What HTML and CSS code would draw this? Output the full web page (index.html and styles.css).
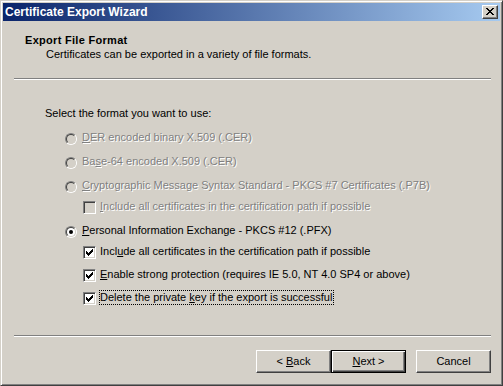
FILE: index.html
```html
<!DOCTYPE html>
<html>
<head>
<meta charset="utf-8">
<link rel="stylesheet" href="styles.css">
</head>
<body>
<div class="window">
  <div class="titlebar">
    <span class="title">Certificate Export Wizard</span>
    <span class="close-btn">
      <svg width="8" height="7" viewBox="0 0 8 7" shape-rendering="crispEdges"><path d="M0 0h2v1h-2zM6 0h2v1h-2zM1 1h2v1h-2zM5 1h2v1h-2zM2 2h4v1h-4zM3 3h2v1h-2zM2 4h4v1h-4zM1 5h2v1h-2zM5 5h2v1h-2zM0 6h2v1h-2zM6 6h2v1h-2z" fill="#000"/></svg>
    </span>
  </div>
  <div class="main">
    <div class="header">
      <div class="h-title">Export File Format</div>
      <div class="h-desc">Certificates can be exported in a variety of file formats.</div>
    </div>
    <div class="sep"></div>
    <div class="content">
      <div class="label">Select the format you want to use:</div>
      <div class="row radio-row gap11 disabled"><span class="radio"></span><span class="txt"><u>D</u>ER encoded binary X.509 (.CER)</span></div>
      <div class="row radio-row gap11 disabled"><span class="radio"></span><span class="txt">Ba<u>s</u>e-64 encoded X.509 (.CER)</span></div>
      <div class="row radio-row gap11 disabled"><span class="radio"></span><span class="txt"><u>C</u>ryptographic Message Syntax Standard - PKCS #7 Certificates (.P7B)</span></div>
      <div class="row check-row gap8 disabled"><span class="check"></span><span class="txt"><u>I</u>nclude all certificates in the certification path if possible</span></div>
      <div class="row radio-row gap11"><span class="radio checked"></span><span class="txt"><u>P</u>ersonal Information Exchange - PKCS #12 (.PFX)</span></div>
      <div class="row check-row gap8"><span class="check on"><svg width="7" height="7" viewBox="0 0 7 7" shape-rendering="crispEdges"><path d="M0 2h1v3h-1zM1 3h1v3h-1zM2 4h1v3h-1zM3 3h1v3h-1zM4 2h1v3h-1zM5 1h1v3h-1zM6 0h1v3h-1z" fill="#000"/></svg></span><span class="txt">Incl<u>u</u>de all certificates in the certification path if possible</span></div>
      <div class="row check-row gap10"><span class="check on"><svg width="7" height="7" viewBox="0 0 7 7" shape-rendering="crispEdges"><path d="M0 2h1v3h-1zM1 3h1v3h-1zM2 4h1v3h-1zM3 3h1v3h-1zM4 2h1v3h-1zM5 1h1v3h-1zM6 0h1v3h-1z" fill="#000"/></svg></span><span class="txt"><u>E</u>nable strong protection (requires IE 5.0, NT 4.0 SP4 or above)</span></div>
      <div class="row check-row gap10"><span class="check on"><svg width="7" height="7" viewBox="0 0 7 7" shape-rendering="crispEdges"><path d="M0 2h1v3h-1zM1 3h1v3h-1zM2 4h1v3h-1zM3 3h1v3h-1zM4 2h1v3h-1zM5 1h1v3h-1zM6 0h1v3h-1z" fill="#000"/></svg></span><span class="txt focus">Delete the private <u>k</u>ey if the export is successful</span></div>
    </div>
    <div class="sep"></div>
    <div class="buttons">
      <span class="btn"><span>&lt; <u>B</u>ack</span></span>
      <span class="btn default"><span><u>N</u>ext &gt;</span></span>
      <span class="btn cancel"><span>Cancel</span></span>
    </div>
  </div>
</div>
</body>
</html>
```
FILE: styles.css
```css
html, body {
  margin: 0;
  padding: 0;
  background: #d4d0c8;
}
body {
  font-family: "Liberation Sans", Arial, sans-serif;
  font-size: 11px;
  line-height: 13px;
  color: #000;
}
u {
  text-decoration: underline;
  text-underline-offset: 1px;
}
.window {
  width: 503px;
  height: 386px;
  box-sizing: border-box;
  border: 1px solid;
  border-color: #d4d0c8 #404040 #404040 #d4d0c8;
  box-shadow: inset 1px 1px 0 #fff, inset -1px -1px 0 #808080;
  padding: 2px;
  display: flex;
  flex-direction: column;
  background: #d4d0c8;
}
.titlebar {
  height: 18px;
  display: flex;
  align-items: center;
  justify-content: space-between;
  padding: 0 2px 0 2px;
  background: linear-gradient(to right, #0a246a, #a6caf0);
  flex: none;
}
.title {
  color: #fff;
  font-weight: bold;
  font-size: 12px;
  line-height: 18px;
}
.close-btn {
  width: 16px;
  height: 14px;
  box-sizing: border-box;
  background: #d4d0c8;
  border: 1px solid;
  border-color: #fff #404040 #404040 #fff;
  box-shadow: inset -1px -1px 0 #808080;
  display: flex;
  align-items: flex-start;
  justify-content: flex-start;
  padding: 2px 0 0 3px;
}
.close-btn svg { display: block; }
.main {
  flex: 1;
  display: flex;
  flex-direction: column;
}
.header {
  padding-top: 13px;
  height: 57px;
  box-sizing: border-box;
}
.h-title {
  font-weight: bold;
  letter-spacing: 0.3px;
  padding-left: 22px;
}
.h-desc {
  padding-left: 43px;
  margin-top: 1px;
}
.sep {
  height: 2px;
  box-sizing: border-box;
  border-top: 1px solid #808080;
  border-bottom: 1px solid #fff;
  margin: 0 9px 0 11px;
  flex: none;
}
.content {
  flex: 1;
  padding: 27px 0 0 42px;
}
.label {
  height: 13px;
}
.row {
  display: flex;
  align-items: flex-start;
  height: 13px;
}
.gap11 { margin-top: 11px; }
.gap10 { margin-top: 10px; }
.gap8 { margin-top: 8px; }
.radio-row {
  padding-left: 20px;
}
.check-row {
  padding-left: 38px;
}
.radio {
  width: 12px;
  height: 12px;
  box-sizing: border-box;
  border-radius: 50%;
  border: 1px solid;
  border-color: #808080 #fff #fff #808080;
  margin-top: 2px;
  margin-right: 5px;
  position: relative;
  flex: none;
}
.radio::before {
  content: "";
  position: absolute;
  inset: 0;
  border-radius: 50%;
  border: 1px solid;
  border-color: #404040 #d4d0c8 #d4d0c8 #404040;
  background: #fff;
}
.disabled .radio::before {
  background: #d4d0c8;
}
.radio.checked::after {
  content: "";
  position: absolute;
  left: 3px;
  top: 3px;
  width: 4px;
  height: 4px;
  border-radius: 50%;
  background: #000;
}
.check {
  width: 13px;
  height: 13px;
  box-sizing: border-box;
  border: 1px solid;
  border-color: #808080 #fff #fff #808080;
  box-shadow: inset 1px 1px 0 #404040, inset -1px -1px 0 #d4d0c8;
  background: #fff;
  margin-top: 1px;
  margin-right: 4px;
  flex: none;
  padding: 2px 0 0 2px;
}
.check svg { display: block; }
.disabled .check {
  background: #d4d0c8;
}
.disabled .txt {
  color: #808080;
  text-shadow: 1px 1px 0 #fff;
}
.txt {
  white-space: nowrap;
}
.focus {
  outline: 1px dotted #000;
  outline-offset: 0px;
  padding-right: 1px;
}
.buttons {
  display: flex;
  justify-content: flex-end;
  padding: 13px 9px 10px 0;
  flex: none;
}
.btn {
  width: 75px;
  height: 23px;
  box-sizing: border-box;
  border: 1px solid;
  border-color: #fff #404040 #404040 #fff;
  box-shadow: inset -1px -1px 0 #808080;
  display: flex;
  align-items: center;
  justify-content: center;
  background: #d4d0c8;
  white-space: pre;
}
.btn.default {
  border: 1px solid #000;
  box-shadow: inset 1px 1px 0 #fff, inset -1px -1px 0 #404040, inset -2px -2px 0 #808080;
}
.btn.cancel {
  margin-left: 10px;
}
```
